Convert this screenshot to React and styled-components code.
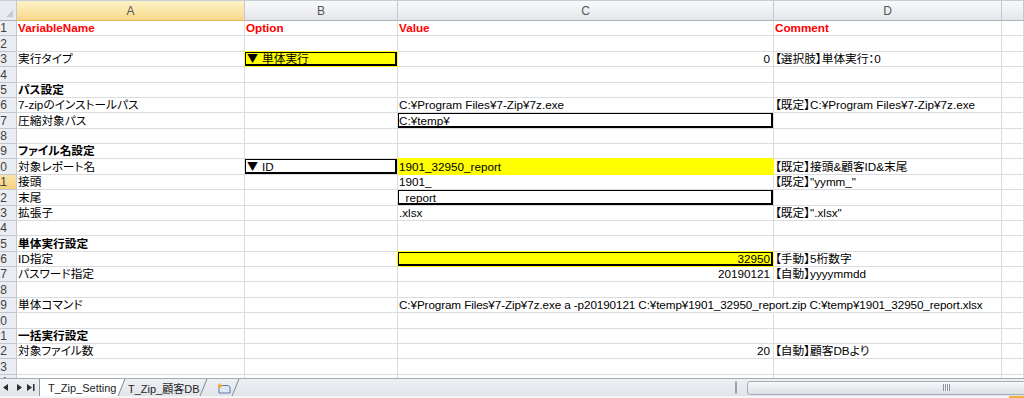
import React from 'react';
import styled, { createGlobalStyle, css } from 'styled-components';

const GRID = '#dadcdd';
const HEAD_LINE = '#c3c8cf';
const COLS = '17px 228px 153px 376px 228px 1fr';

// Excel row pitch in this capture is ~15.38px; round each gridline to a whole pixel
const ROW_PX = 15.38;
const ROW_COUNT = 24;
const rowHeights = Array.from(
  { length: ROW_COUNT },
  (_, i) => Math.round(20 + ROW_PX * (i + 1)) - Math.round(20 + ROW_PX * i)
);

const rows = [
  {
    a: { text: 'VariableName', red: true },
    b: { text: 'Option', red: true },
    c: { text: 'Value', red: true },
    d: { text: 'Comment', red: true },
  },
  {},
  {
    a: { text: '実行タイプ' },
    b: { text: '単体実行', drop: true, fill: true, box: true },
    c: { text: '0', right: true },
    d: { text: '【選択肢】単体実行：0' },
  },
  {},
  { a: { text: 'パス設定', bold: true } },
  {
    a: { text: '7-zipのインストールパス' },
    c: { text: 'C:¥Program Files¥7-Zip¥7z.exe' },
    d: { text: '【既定】C:¥Program Files¥7-Zip¥7z.exe' },
  },
  { a: { text: '圧縮対象パス' }, c: { text: 'C:¥temp¥', box: true } },
  {},
  { a: { text: 'ファイル名設定', bold: true } },
  {
    a: { text: '対象レポート名' },
    b: { text: 'ID', drop: true, box: true },
    c: { text: '1901_32950_report', fill: true },
    d: { text: '【既定】接頭&顧客ID&末尾' },
  },
  { a: { text: '接頭' }, c: { text: '1901_' }, d: { text: '【既定】"yymm_"' } },
  { a: { text: '末尾' }, c: { text: '_report', box: true } },
  { a: { text: '拡張子' }, c: { text: '.xlsx' }, d: { text: '【既定】".xlsx"' } },
  {},
  { a: { text: '単体実行設定', bold: true } },
  {
    a: { text: 'ID指定' },
    c: { text: '32950', right: true, fill: true, box: true },
    d: { text: '【手動】5桁数字' },
  },
  {
    a: { text: 'パスワード指定' },
    c: { text: '20190121', right: true },
    d: { text: '【自動】yyyymmdd' },
  },
  {},
  {
    a: { text: '単体コマンド' },
    c: {
      text: 'C:¥Program Files¥7-Zip¥7z.exe a -p20190121 C:¥temp¥1901_32950_report.zip C:¥temp¥1901_32950_report.xlsx',
      spill: true,
    },
  },
  {},
  { a: { text: '一括実行設定', bold: true } },
  {
    a: { text: '対象ファイル数' },
    c: { text: '20', right: true },
    d: { text: '【自動】顧客DBより' },
  },
  {},
  {},
];

const GlobalStyle = createGlobalStyle`
  html, body { margin: 0; padding: 0; background: #fff; overflow: hidden; }
`;

const Sheet = styled.div`
  width: 1024px;
  height: 398px;
  display: flex;
  flex-direction: column;
  overflow: hidden;
  font-family: "Liberation Sans", "Noto Sans CJK JP", sans-serif;
  font-size: 11.7px;
  font-feature-settings: "palt";
  color: #000;
`;

const HeaderRow = styled.div`
  display: grid;
  grid-template-columns: ${COLS};
  height: 21px;
  flex-shrink: 0;
`;

const Corner = styled.div`
  position: relative;
  background: #e8ebef;
  border-right: 1px solid ${HEAD_LINE};
  border-bottom: 1px solid #aab2bc;
  box-shadow: inset 0 1px 0 #c9ced4;
  &::after {
    content: '';
    position: absolute;
    right: 3px;
    bottom: 3px;
    width: 7px;
    height: 7px;
    background: #c6cbd2;
    clip-path: polygon(100% 0, 100% 100%, 0 100%);
  }
`;

const ColHead = styled.div`
  display: flex;
  align-items: center;
  justify-content: center;
  padding-top: 1px;
  font-family: "Liberation Sans", sans-serif;
  font-size: 12px;
  color: #575757;
  border-right: 1px solid ${HEAD_LINE};
  border-bottom: 1px solid ${(p) => (p.$active ? '#e9b650' : '#aab2bc')};
  box-shadow: inset 0 1px 0 #c9ced4;
  background: ${(p) =>
    p.$active
      ? 'linear-gradient(#fdf2cb, #fbe6a8 55%, #f7d68c)'
      : 'linear-gradient(#f9fafb, #eef0f3 55%, #e3e6ea)'};
`;

const Body = styled.div`
  flex: 1;
  min-height: 0;
  overflow: hidden;
  display: grid;
  grid-template-columns: ${COLS};
  grid-template-rows: ${rowHeights.map((h) => `${h}px`).join(' ')};
`;

const RowHead = styled.div`
  display: flex;
  align-items: center;
  justify-content: flex-end;
  padding-right: 9px;
  overflow: hidden;
  font-family: "Liberation Sans", sans-serif;
  font-size: 12px;
  color: #3f3f3f;
  border-right: 1px solid ${HEAD_LINE};
  border-bottom: 1px solid ${HEAD_LINE};
  background: ${(p) => (p.$active ? 'linear-gradient(#fbe4a9, #f6d07e)' : '#eaedf1')};
`;

const Cell = styled.div`
  position: relative;
  display: flex;
  align-items: flex-end;
  justify-content: ${(p) => (p.$right ? 'flex-end' : 'flex-start')};
  padding: 0 3px 1px 1px;
  line-height: 13px;
  white-space: nowrap;
  overflow: ${(p) => (p.$spill ? 'visible' : 'hidden')};
  letter-spacing: ${(p) => (p.$spill ? '-0.1px' : 'normal')};
  color: ${(p) => (p.$red ? '#ff0000' : '#000')};
  font-weight: ${(p) => (p.$bold || p.$red ? 700 : 400)};
  background: ${(p) => (p.$fill ? '#ffff00' : '#fff')};
  border-right: 1px solid ${(p) => (p.$spill ? 'transparent' : GRID)};
  border-bottom: 1px solid ${GRID};
  z-index: ${(p) => (p.$spill || p.$box ? 1 : 'auto')};

  ${(p) =>
    p.$fill &&
    css`
      border-color: #ffff00;
      box-shadow: -1px -1px 0 #ffff00;
    `}

  ${(p) =>
    p.$box &&
    css`
      &::after {
        content: '';
        position: absolute;
        top: -1px;
        left: -1px;
        right: 0;
        bottom: 0;
        border: 2px solid #000;
        pointer-events: none;
      }
    `}
`;

const DropMark = styled.span`
  font-family: "Noto Sans CJK JP", sans-serif;
  font-size: 11px;
  line-height: 13px;
  height: 13px;
  font-feature-settings: normal;
  margin: 0 4px 0 1px;
`;

const TabBar = styled.div`
  flex-shrink: 0;
  height: 18px;
  display: flex;
  border-top: 1px solid #a3abb5;
  background: linear-gradient(#eef0f3, #e1e5ea);
  box-sizing: border-box;
`;

const NavButtons = styled.div`
  width: 40px;
  flex-shrink: 0;
  display: flex;
  align-items: center;
  padding-left: 3px;
  box-sizing: border-box;
  border-right: 1px solid #8e969f;
`;

const NavIcon = styled.svg`
  width: ${(p) => p.$w}px;
  height: 7px;
  margin-right: ${(p) => p.$gap}px;
  fill: #2c2c2c;
`;

const Tab = styled.div`
  position: relative;
  width: ${(p) => p.$w}px;
  flex-shrink: 0;
  display: flex;
  &::after {
    content: '';
    position: absolute;
    right: 3px;
    top: 0;
    bottom: 0;
    width: 1px;
    background: #7f8790;
    transform: skewX(-22deg);
  }
`;

const TabFace = styled.div`
  flex: 1;
  display: flex;
  align-items: center;
  padding-left: ${(p) => p.$pad}px;
  font-size: 11px;
  font-feature-settings: normal;
  color: #1e1e1e;
  background: ${(p) => (p.$active ? '#fff' : 'transparent')};
  clip-path: polygon(0 0, 100% 0, calc(100% - 7px) 100%, 0 100%);
`;

const Spacer = styled.div`
  flex: 1;
`;

const ScrollArea = styled.div`
  width: 289px;
  flex-shrink: 0;
  display: flex;
  align-items: center;
  overflow: hidden;
`;

const SplitHandle = styled.div`
  width: 4px;
  height: 11px;
  margin-right: 4px;
  border: 1px solid #9aa1aa;
  border-radius: 1px;
  background: linear-gradient(90deg, #fff 50%, #c5cad1 50%);
`;

const ArrowButton = styled.svg`
  width: 6px;
  height: 8px;
  margin-right: 6px;
  fill: #3b3b3b;
`;

const Thumb = styled.div`
  width: 398px;
  height: 14px;
  flex-shrink: 0;
  display: flex;
  align-items: center;
  justify-content: center;
  border: 1px solid #a6adb7;
  border-radius: 3px;
  box-sizing: border-box;
  background: linear-gradient(#f7f8fa, #e9ecf0 50%, #dde1e6);
`;

const Grip = styled.div`
  width: 7px;
  height: 7px;
  background: repeating-linear-gradient(90deg, #8d949d 0 1px, #f4f5f7 1px 2px);
`;

const StatusStrip = styled.div`
  flex-shrink: 0;
  height: 2px;
  display: flex;
  justify-content: flex-end;
  background: #f4f5f7;
`;

const StatusMark = styled.div`
  width: 15px;
  background: #f2b03c;
`;

const NewSheetIcon = () => (
  <svg width="16" height="12" viewBox="0 0 16 12">
    <path d="M3 3.5h9.5l1.5 1.5v6H3z" fill="#dfe8f5" stroke="#5d79a6" strokeWidth="1" />
    <path d="M4 1l.9 1.8L7 3l-1.6 1.1L6 6 4 5 2 6l.6-1.9L1 3l2.1-.2z" fill="#f6a821" />
  </svg>
);

const colKeys = ['a', 'b', 'c', 'd'];

function App() {
  return (
    <>
      <GlobalStyle />
      <Sheet>
        <HeaderRow>
          <Corner />
          <ColHead $active>A</ColHead>
          <ColHead>B</ColHead>
          <ColHead>C</ColHead>
          <ColHead>D</ColHead>
          <ColHead />
        </HeaderRow>

        <Body>
          {rows.map((row, i) => (
            <React.Fragment key={i}>
              <RowHead $active={i + 1 === 11}>{i + 1}</RowHead>
              {colKeys.map((k) => {
                const cell = row[k] || {};
                return (
                  <Cell
                    key={k}
                    $red={cell.red}
                    $bold={cell.bold}
                    $right={cell.right}
                    $fill={cell.fill}
                    $box={cell.box}
                    $spill={cell.spill}
                  >
                    {cell.drop && <DropMark>▼</DropMark>}
                    {cell.text}
                  </Cell>
                );
              })}
              <Cell />
            </React.Fragment>
          ))}
        </Body>

        <TabBar>
          <NavButtons>
            <NavIcon $w={5} $gap={9} viewBox="0 0 5 7">
              <path d="M5 0v7L0 3.5z" />
            </NavIcon>
            <NavIcon $w={5} $gap={5} viewBox="0 0 5 7">
              <path d="M0 0v7l5-3.5z" />
            </NavIcon>
            <NavIcon $w={8} $gap={0} viewBox="0 0 8 7">
              <path d="M0 0v7l5-3.5z" />
              <rect x="6" y="0" width="1.5" height="7" />
            </NavIcon>
          </NavButtons>
          <Tab $w={85}>
            <TabFace $active $pad={8}>T_Zip_Setting</TabFace>
          </Tab>
          <Tab $w={82}>
            <TabFace $pad={3}>T_Zip_顧客DB</TabFace>
          </Tab>
          <Tab $w={32}>
            <TabFace $pad={9}>
              <NewSheetIcon />
            </TabFace>
          </Tab>
          <Spacer />
          <ScrollArea>
            <SplitHandle />
            <ArrowButton viewBox="0 0 6 8">
              <path d="M6 0v8L0 4z" />
            </ArrowButton>
            <Thumb>
              <Grip />
            </Thumb>
          </ScrollArea>
        </TabBar>
        <StatusStrip>
          <StatusMark />
        </StatusStrip>
      </Sheet>
    </>
  );
}

export default App;
